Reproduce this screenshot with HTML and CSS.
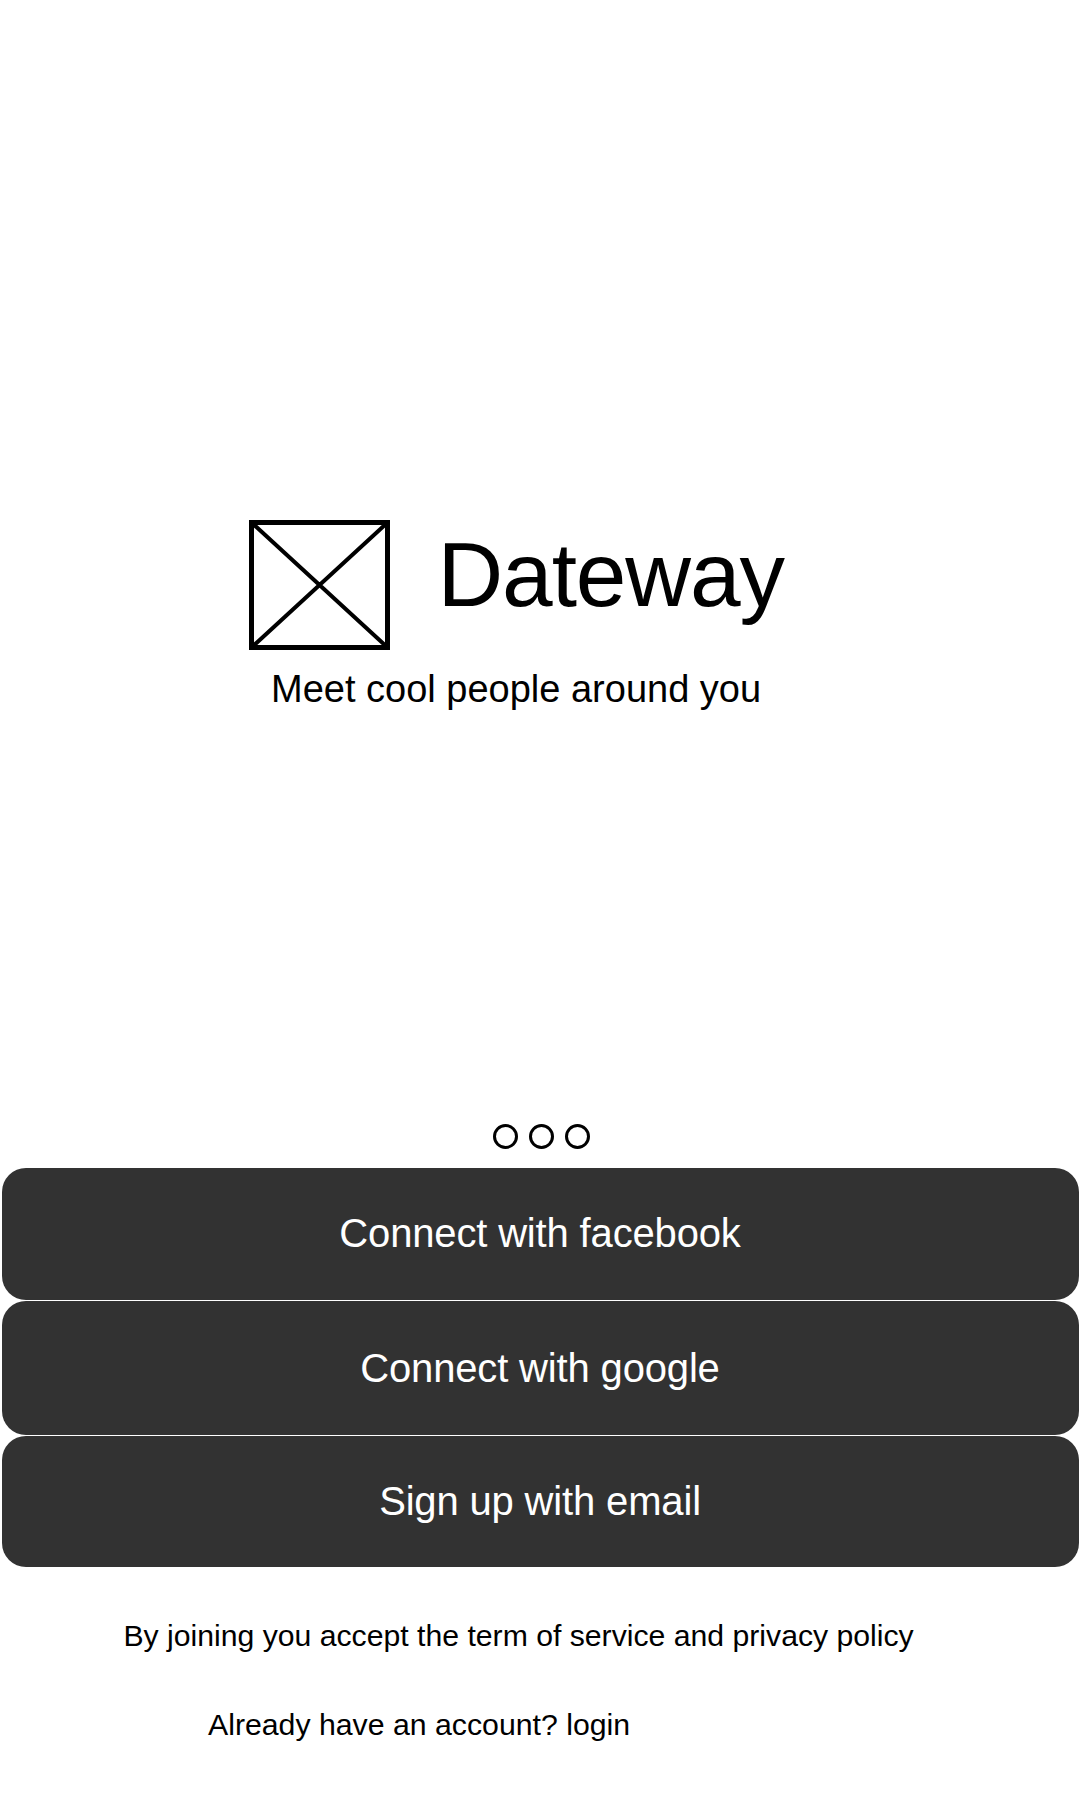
FILE: index.html
```
<!DOCTYPE html>
<html lang="en">
<head>
<meta charset="utf-8">
<title>Dateway</title>
<link rel="stylesheet" href="styles.css">
</head>
<body>
<main class="screen">
  <header class="brand">
    <svg class="logo" viewBox="0 0 141 130" width="141" height="130" fill="none" stroke="#000">
      <path d="M3 3L138 127M138 3L3 127" stroke-width="4"/>
      <rect x="2.5" y="2.5" width="136" height="125" stroke-width="5"/>
    </svg>
    <h1 class="name">Dateway</h1>
  </header>
  <p class="tagline">Meet cool people around you</p>
  <div class="dots"><span class="dot"></span><span class="dot"></span><span class="dot"></span></div>
  <div class="actions">
    <button class="action action-first">Connect with facebook</button>
    <button class="action">Connect with google</button>
    <button class="action">Sign up with email</button>
  </div>
  <p class="terms">By joining you accept the term of service and privacy policy</p>
  <p class="login">Already have an account? login</p>
</main>
</body>
</html>
```
FILE: styles.css
```
* { box-sizing: border-box; }
body { margin: 0; background: #fff; color: #000; font-family: "Liberation Sans", Arial, sans-serif; }
.screen { height: 1800px; padding-top: 520px; display: flex; flex-direction: column; overflow: hidden; }
.brand { display: flex; height: 130px; padding-left: 249px; }
.logo { flex: none; }
.name { margin: 10px 0 0 47.5px; font-size: 91px; line-height: 90px; font-weight: 400; letter-spacing: -1.1px; white-space: nowrap; }
.tagline { margin: 17px 0 0 271px; font-size: 38px; line-height: 44px; }
.dots { display: flex; gap: 11px; margin-top: 413px; padding-left: 493px; }
.dot { width: 25px; height: 25px; border: 3px solid #000; border-radius: 50%; }
.actions { display: grid; grid-template-rows: 132px 134px 131px; gap: 1px; margin-top: 19px; padding: 0 1px 0 2px; }
.action { border: 0; border-radius: 24px; padding: 0 1px 0 0; background: #323232; color: #fff; font: 40px "Liberation Sans", Arial, sans-serif; letter-spacing: -0.16px; }
.action-first { padding-bottom: 2px; }
.terms { margin: 51px 0 0 123.4px; font-size: 30.2px; line-height: 36px; white-space: nowrap; }
.login { margin: 53px 0 0 208px; font-size: 30.25px; line-height: 36px; }
```
